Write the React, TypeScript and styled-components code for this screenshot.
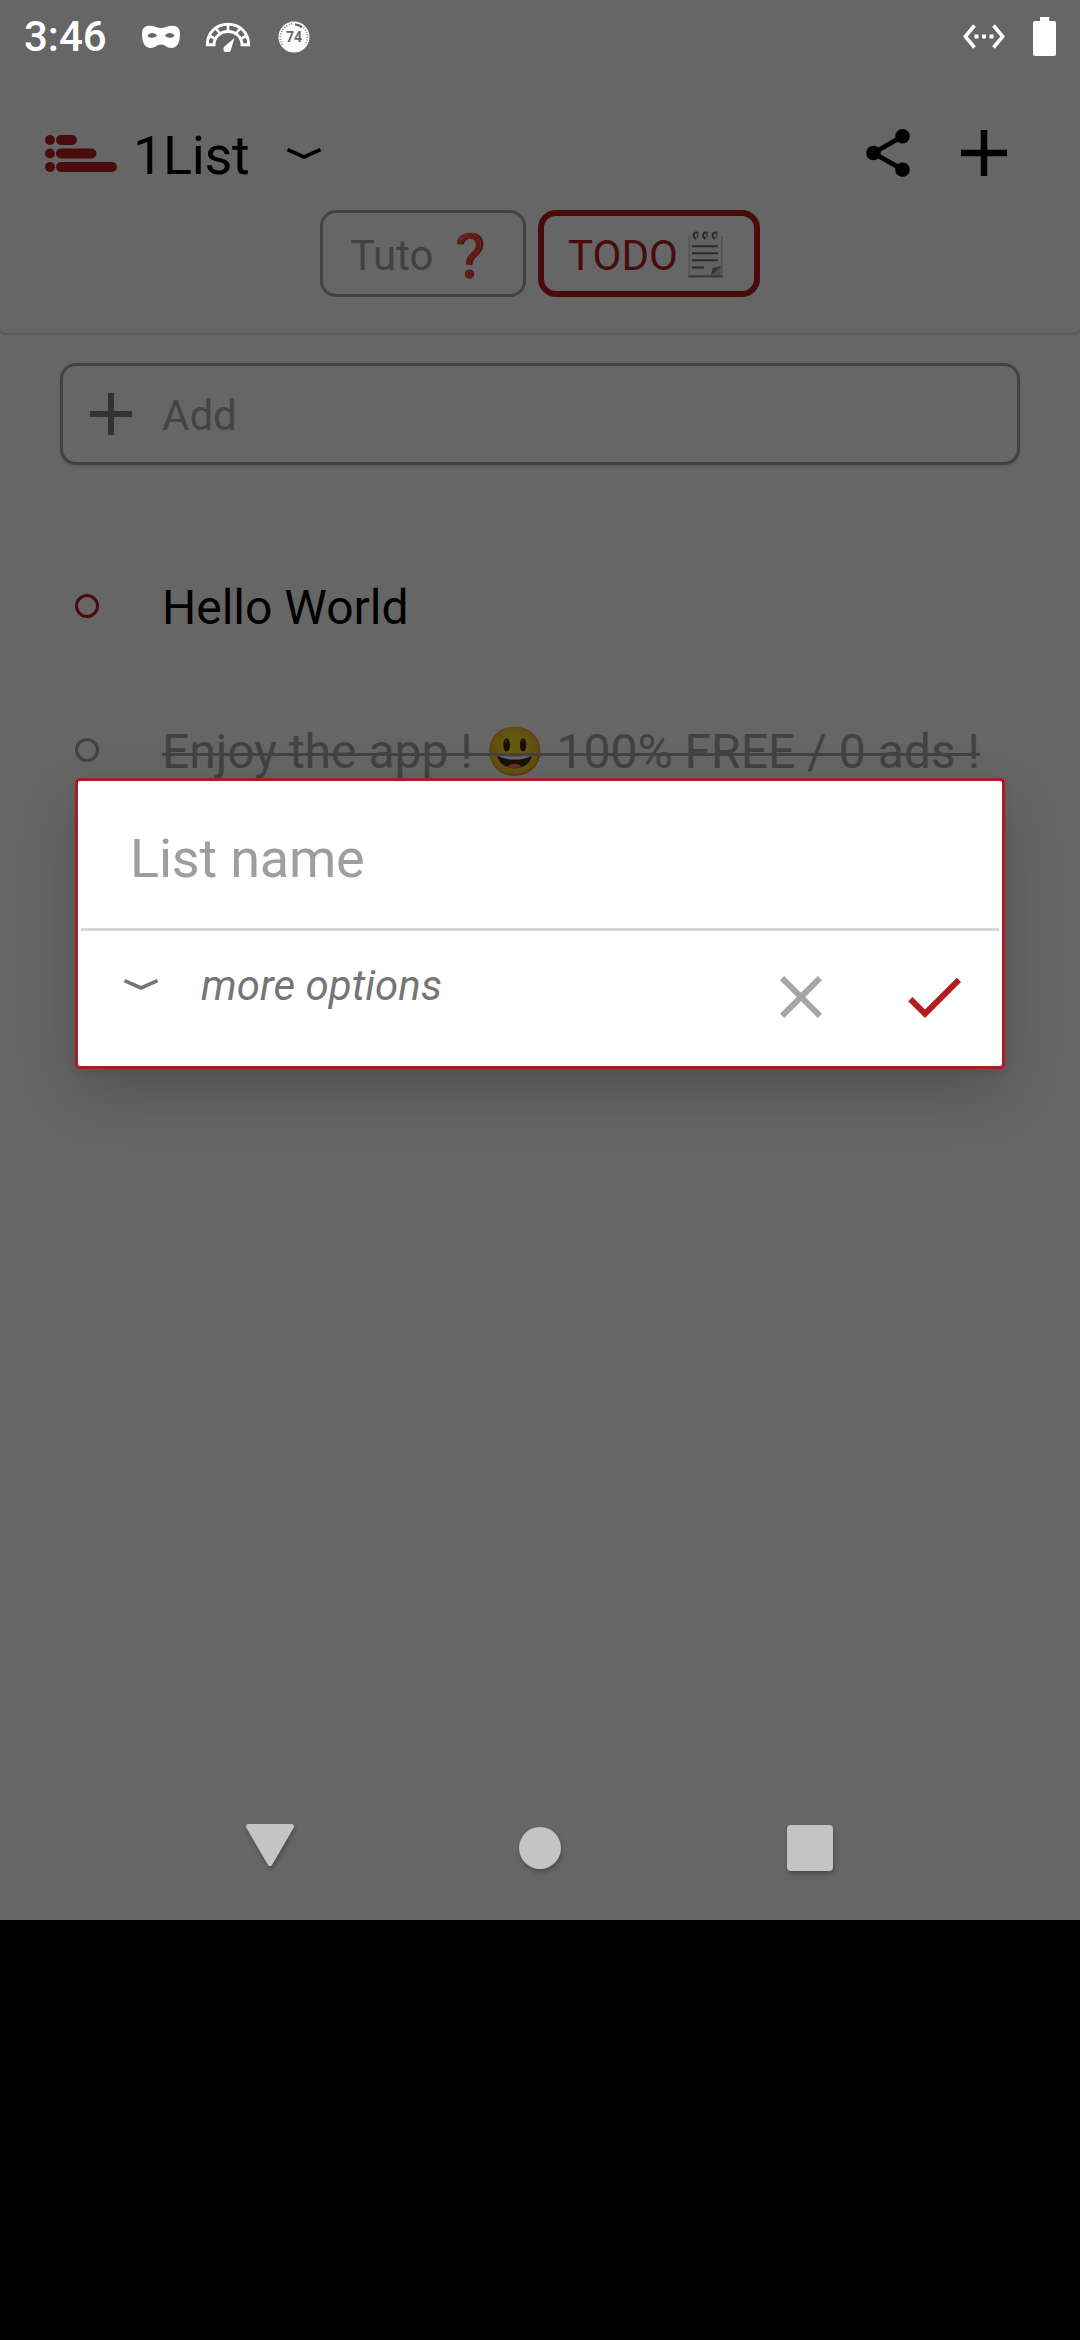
import React from "react";
import styled, { createGlobalStyle } from "styled-components";

const GlobalStyle = createGlobalStyle`
  * { box-sizing: border-box; }
  body { margin: 0; background: #000; }
  svg { display: block; flex: none; }
`;

const RED = "#490b0b";
const GREY = "#424242";

const Device = styled.div`
  width: 1080px;
  height: 2340px;
  background: #000;
  font-family: Roboto, "Noto Sans", sans-serif;
`;

const Screen = styled.div`
  position: relative;
  width: 1080px;
  height: 1920px;
  background: #666;
  display: flex;
  flex-direction: column;
`;

const StatusBar = styled.div`
  height: 72px;
  display: flex;
  align-items: center;
  justify-content: space-between;
  padding: 1px 24px 0;
  color: #fff;
`;

const Clock = styled.span`
  width: 93px;
  padding-top: 1px;
  font-size: 42px;
  font-weight: 500;
  line-height: 50px;
`;

const StatusIcons = styled.div<{ $gap: number }>`
  display: flex;
  align-items: center;
  gap: ${(p) => p.$gap}px;
`;

const BadgeSlot = styled.span`
  margin-left: 3px;
`;

const Header = styled.header`
  height: 261px;
  padding-top: 24px;
  border-radius: 6px;
  box-shadow: 0 1px 3px rgba(0, 0, 0, 0.2);
  clip-path: inset(0 0 -8px 0);
`;

const TitleRow = styled.div`
  height: 114px;
  display: flex;
  align-items: center;
  padding: 0 60px 0 45px;
`;

const Title = styled.h1`
  margin: 0 37px 0 15px;
  padding-top: 5px;
  font-size: 54px;
  font-weight: 400;
  line-height: 64px;
  letter-spacing: -0.35px;
  color: #000;
`;

const HeaderActions = styled.div`
  display: flex;
  align-items: center;
  gap: 51px;
  margin-left: auto;
  padding-right: 13px;
`;

const Tabs = styled.div`
  display: flex;
  justify-content: center;
  gap: 12px;
`;

const Tab = styled.div<{ $active?: boolean; $width: number }>`
  width: ${(p) => p.$width}px;
  height: 87px;
  display: flex;
  align-items: center;
  padding: 5px 0 0 ${(p) => (p.$active ? 24 : 27)}px;
  border: ${(p) => (p.$active ? `6px solid ${RED}` : `3px solid ${GREY}`)};
  border-radius: ${(p) => (p.$active ? 18 : 16)}px;
  color: ${(p) => (p.$active ? RED : GREY)};
  font-size: 42px;
  line-height: 50px;
  white-space: pre;
`;

const NotepadSlot = styled.span`
  margin: 0 0 4px 10px;
`;

const Emoji = styled.span`
  display: inline-block;
  filter: brightness(0.4);
`;

const AddBox = styled.div`
  margin: 30px 60px 69px;
  height: 102px;
  display: flex;
  align-items: center;
  padding: 0 27px;
  border: 3px solid ${GREY};
  border-radius: 16px;
  box-shadow: 0 1px 3px rgba(0, 0, 0, 0.15);
`;

const Placeholder = styled.span`
  margin-left: 30px;
  padding-top: 4px;
  font-size: 42px;
  line-height: 50px;
  color: #444;
`;

const Item = styled.div<{ $done?: boolean }>`
  height: 144px;
  display: flex;
  align-items: center;
  padding-left: 75px;
  font-size: 48px;
  line-height: 56px;
  color: ${(p) => (p.$done ? GREY : "#000")};
`;

const Bullet = styled.span<{ $color: string }>`
  width: 24px;
  height: 24px;
  margin-right: 63px;
  border: 3px solid ${(p) => p.$color};
  border-radius: 50%;
`;

const ItemText = styled.span<{ $done?: boolean }>`
  position: relative;
  padding-top: 3px;
  white-space: pre;
  &::after {
    content: "";
    display: ${(p) => (p.$done ? "block" : "none")};
    position: absolute;
    left: 0;
    right: 0;
    top: 32px;
    height: 3px;
    background: ${GREY};
  }
`;

const NavBar = styled.nav`
  height: 144px;
  margin-top: auto;
  padding: 0 135px;
  display: grid;
  grid-template-columns: repeat(3, 270px);
  align-items: center;
  justify-items: center;
`;

const NavIcon = styled.svg<{ $raise?: number }>`
  overflow: visible;
  margin-bottom: ${(p) => p.$raise ?? 0}px;
  filter: drop-shadow(1px 3px 2px rgba(0, 0, 0, 0.25));
`;

const Dialog = styled.div`
  position: absolute;
  left: 75px;
  top: 778px;
  width: 930px;
  height: 291px;
  background: #fff;
  border: 3px solid #a52022;
  border-radius: 5px;
  box-shadow: 0 24px 60px rgba(0, 0, 0, 0.2), 0 3px 10px rgba(0, 0, 0, 0.06);
`;

const NameField = styled.div`
  height: 150px;
  margin: 0 3px;
  padding: 9px 49px 0;
  display: flex;
  align-items: center;
  border-bottom: 3px solid #cfd8dc;
  font-size: 54px;
  line-height: 64px;
  letter-spacing: -0.2px;
  color: #9e9e9e;
`;

const DialogActions = styled.div`
  height: 135px;
  display: flex;
  align-items: flex-start;
  padding: 30px 32px 0 45px;
`;

const MoreOptions = styled.div`
  flex: 1;
  display: flex;
  align-items: center;
  gap: 42px;
  font-size: 42px;
  font-style: italic;
  line-height: 50px;
  letter-spacing: 0.05px;
  color: #757575;
`;

const ActionIcons = styled.div`
  display: flex;
  gap: 61px;
`;

const ChevronIcon = styled.svg<{ $raise: number }>`
  margin-bottom: ${(p) => p.$raise}px;
`;

const Chevron = ({ color, raise = 0 }: { color: string; raise?: number }) => (
  <ChevronIcon $raise={raise} width="36" height="12" viewBox="0 0 36 12">
    <path d="M1.5 1.6 L18 9 L34.5 1.6" fill="none" stroke={color} strokeWidth="3.6" />
  </ChevronIcon>
);

const Plus = ({ size, color }: { size: number; color: string }) => (
  <svg width={size} height={size} viewBox="0 0 14 14">
    <path d="M14 8H8v6H6V8H0V6h6V0h2v6h6z" fill={color} />
  </svg>
);

const Mask = () => (
  <svg width="40" height="24" viewBox="0 0 40 24">
    <path
      fill="#fff"
      fillRule="evenodd"
      d="M8 .8C13 .3 16 3 20 3S27 .3 32 .8C37 1.300 39 4 39 9C39 16 37 22.500 31 23C26 23.200 24 19.500 20 19.500S14 23.200 9 23C3 22.500 1 16 1 9C1 4 3 1.300 8 .8ZM6.500 10.500C7.500 13.500 14 13.500 16 10.800C14.500 7 8.500 7 6.500 10.500ZM33.500 10.500C31.500 7 25.500 7 24 10.800C26 13.500 32.500 13.500 33.500 10.500Z"
    />
  </svg>
);

const Gauge = () => (
  <svg width="46" height="30" viewBox="0 0 46 30">
    <g fill="none" stroke="#fff">
      <path
        strokeWidth="2.900"
        d="M2.300 22.800C2.300 10.500 11 2.300 23 2.300S43.700 10.500 43.700 22.800H37C37 15 30.500 9.500 23 9.500S9 15 9 22.800Z"
      />
      <path
        strokeWidth="2.600"
        d="M4 13.500L11.500 17.500M10.500 6L15.500 12M23 2V9.500M35.500 6L30.500 12M42 13.500L34.500 17.500"
      />
    </g>
    <path fill="#fff" d="M29.500 16L26 27.500A3.800 3.800 0 1 1 20 24Z" />
  </svg>
);

const BadgeText = styled.text`
  font: 700 14px Roboto, sans-serif;
`;

const Badge = () => (
  <svg width="32" height="32" viewBox="0 0 32 32">
    <circle cx="16" cy="16" r="15.500" fill="#fff" />
    <path
      d="M4.700 23.600A13.600 13.600 0 0 1 16 2.600"
      fill="none"
      stroke="#888"
      strokeWidth="2"
      strokeDasharray="1 1.600"
    />
    <path d="M17 3.400A12.700 12.700 0 0 1 24 6.200" fill="none" stroke="#666" strokeWidth="2.400" />
    <path
      d="M25.500 6.500A13.600 13.600 0 0 1 27.300 23.600"
      fill="none"
      stroke="#888"
      strokeWidth="2"
      strokeDasharray="1 1.600"
    />
    <BadgeText x="16" y="21" textAnchor="middle" fill="#666">
      74
    </BadgeText>
  </svg>
);

const Ethernet = () => (
  <svg width="42" height="25" viewBox="0 0 42 25">
    <path
      d="M11.500 1.500L2.300 12.500L11.500 23.500M30.500 1.500L39.700 12.500L30.500 23.500"
      fill="none"
      stroke="#fff"
      strokeWidth="3.600"
    />
    <path d="M11.500 10.500h4v4h-4zM19 10.500h4v4h-4zM26.500 10.500h4v4h-4z" fill="#fff" />
  </svg>
);

const Battery = () => (
  <svg width="23" height="39" viewBox="0 0 23 39">
    <path d="M7 0h9.200v4H21q2 0 2 2v31q0 2-2 2H2q-2 0-2-2V6q0-2 2-2h5z" fill="#fff" />
  </svg>
);

const Logo = () => (
  <svg width="73" height="37" viewBox="0 0 73 37">
    <g fill={RED}>
      <circle cx="5" cy="5" r="5" />
      <circle cx="5" cy="18.500" r="5" />
      <circle cx="5" cy="32" r="5" />
      <rect x="11" y="0" width="21" height="10" rx="5" />
      <rect x="11" y="13.500" width="40.500" height="10" rx="5" />
      <rect x="11" y="27" width="61" height="10" rx="5" />
    </g>
  </svg>
);

const Share = () => (
  <svg width="44" height="48" viewBox="0 0 44 48">
    <path d="M36.500 7.300L7.500 24L36.500 40.700" fill="none" stroke="#000" strokeWidth="4.800" />
    <circle cx="36.500" cy="7.300" r="7.300" />
    <circle cx="7.500" cy="24" r="7.300" />
    <circle cx="36.500" cy="40.700" r="7.300" />
  </svg>
);

const Notepad = () => (
  <svg width="35" height="47" viewBox="0 0 35 47">
    <path d="M.5 5H34.500V46H.5Z" fill="#505050" />
    <path d="M1.500 4H33V36L23 44H1.500Z" fill="#626262" />
    <path d="M.5 44.200H34.500V46.500H.5Z" fill="#3d3d3d" />
    <path d="M23 44.500L24.500 37L34 34.500Z" fill="#343434" />
    <path d="M4 15.300H30M4 22.300H30M4 29.300H30M4 36.500H16" stroke="#2b2b2b" strokeWidth="2" />
    <path
      d="M9.500 1.800C6 .5 3.800 5 7.500 7.500M19 1.800C15.500 .5 13.300 5 17 7.500M28.500 1.800C25 .5 22.800 5 26.500 7.500"
      fill="none"
      stroke="#292929"
      strokeWidth="2"
      strokeLinecap="round"
    />
    <path d="M9.500 2v4M19 2v4M28.500 2v4" stroke="#3a3a3a" strokeWidth="1.500" strokeLinecap="round" />
  </svg>
);

export default function App() {
  return (
    <Device>
      <GlobalStyle />
      <Screen>
        <StatusBar>
          <StatusIcons $gap={24}>
            <Clock>3:46</Clock>
            <Mask />
            <Gauge />
            <BadgeSlot>
              <Badge />
            </BadgeSlot>
          </StatusIcons>
          <StatusIcons $gap={28}>
            <Ethernet />
            <Battery />
          </StatusIcons>
        </StatusBar>
        <Header>
          <TitleRow>
            <Logo />
            <Title>1List</Title>
            <Chevron color="#000" raise={-2} />
            <HeaderActions>
              <Share />
              <Plus size={46} color="#000" />
            </HeaderActions>
          </TitleRow>
          <Tabs>
            <Tab $width={206}>
              Tuto <Emoji>❓</Emoji>
            </Tab>
            <Tab $active $width={222}>
              TODO
              <NotepadSlot>
                <Notepad />
              </NotepadSlot>
            </Tab>
          </Tabs>
        </Header>
        <AddBox>
          <Plus size={42} color="#333" />
          <Placeholder>Add</Placeholder>
        </AddBox>
        <Item>
          <Bullet $color={RED} />
          <ItemText>Hello World</ItemText>
        </Item>
        <Item $done>
          <Bullet $color={GREY} />
          <ItemText $done>
            Enjoy the app ! <Emoji>😃</Emoji> 100% FREE / 0 ads !
          </ItemText>
        </Item>
        <NavBar>
          <NavIcon $raise={6} width="50" height="42" viewBox="0 0 50 42">
            <path
              d="M3.500 2.500H46.500L25 39.500Z"
              fill="#c4c4c4"
              stroke="#c4c4c4"
              strokeWidth="5"
              strokeLinejoin="round"
            />
          </NavIcon>
          <NavIcon width="42" height="42" viewBox="0 0 42 42">
            <circle cx="21" cy="21" r="21" fill="#c4c4c4" />
          </NavIcon>
          <NavIcon width="46" height="46" viewBox="0 0 46 46">
            <rect width="46" height="46" rx="4" fill="#c4c4c4" />
          </NavIcon>
        </NavBar>
        <Dialog>
          <NameField>List name</NameField>
          <DialogActions>
            <MoreOptions>
              <Chevron color="#757575" raise={3} />
              more options
            </MoreOptions>
            <ActionIcons>
              <svg width="72" height="72" viewBox="0 0 24 24">
                <path
                  fill="#a6a6a6"
                  d="M19 6.410L17.590 5 12 10.590 6.410 5 5 6.410 10.590 12 5 17.590 6.410 19 12 13.410 17.590 19 19 17.590 13.410 12z"
                />
              </svg>
              <svg width="72" height="72" viewBox="0 0 24 24">
                <path fill="#b71c1c" d="M9 16.170L4.830 12l-1.420 1.410L9 19 21 7l-1.410-1.410z" />
              </svg>
            </ActionIcons>
          </DialogActions>
        </Dialog>
      </Screen>
    </Device>
  );
}
